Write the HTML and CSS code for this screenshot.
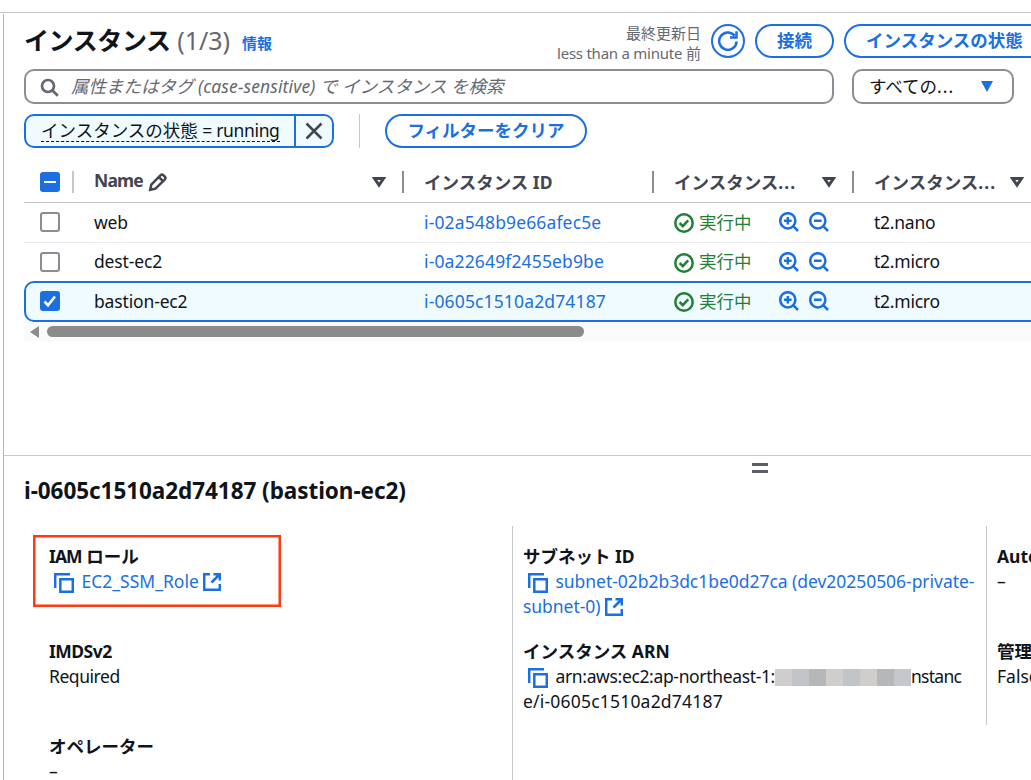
FILE: index.html
```
<!DOCTYPE html>
<html lang="ja">
<head>
	<meta charset="UTF-8">
	<title>インスタンス | EC2</title>
	<link rel="stylesheet" href="styles.css">
</head>
<body>
<svg class="defs">
	<symbol id="i-search" viewBox="0 0 20 20"><circle cx="8" cy="8" r="6"/><path d="M12.3 12.3l5.5 5.5"/></symbol>
	<symbol id="i-zoom-in" viewBox="0 0 20 20"><circle cx="8.8" cy="8.8" r="7.6"/><path d="M14.2 14.2l4.8 4.8M5 8.8h7.6M8.8 5v7.6"/></symbol>
	<symbol id="i-zoom-out" viewBox="0 0 20 20"><circle cx="8.8" cy="8.8" r="7.6"/><path d="M14.2 14.2l4.8 4.8M5 8.8h7.6"/></symbol>
	<symbol id="i-ok" viewBox="0 0 20 20"><circle cx="10" cy="10" r="8.7"/><path d="M5.6 10l3.2 3.2 5.4-5.8"/></symbol>
	<symbol id="i-copy" viewBox="0 0 20 20"><path d="M1.2 15V1.2H16M6.3 6.3h12.5v12.5H6.3z"/></symbol>
	<symbol id="i-external" viewBox="0 0 18 18"><path d="M7 1.2H1.2v15.6h15.6V11M10.5 1.2h6.3V7.500M16.500 1.500L8.500 9.500"/></symbol>
	<symbol id="i-pen" viewBox="0 0 20 20"><path d="M2.200 17.800l1.100-5.300L12.400 3.300a2.200 2.200 0 0 1 3.100 0l1.200 1.200a2.200 2.200 0 0 1 0 3.100L7.500 16.700zM10.800 5l4.200 4.200"/></symbol>
	<symbol id="i-sort" viewBox="0 0 14 12"><path d="M2.500 2.500h9L7 9z"/></symbol>
</svg>
<div class="page">
	<div class="list-panel">
		<div class="list-head">
			<h1><span class="title">インスタンス</span> <span class="counter">(1/3)</span></h1>
			<a class="info">情報</a>
			<div class="updated">最終更新日<br><span class="ago">less than a minute</span> 前</div>
			<a class="btn btn-round"><svg viewBox="0 0 20 20"><path d="M16.600 4.600A8.700 8.700 0 1 0 18.600 10.500M18.500 0.200V6.500H12"/></svg></a>
			<a class="btn btn-connect">接続</a>
			<a class="btn btn-state">インスタンスの状態</a>
		</div>
		<div class="search-row">
			<div class="search">
				<svg class="icon"><use href="#i-search"/></svg>
				<span>属性またはタグ <i class="hint">(case-sensitive)</i> で インスタンス を検索</span>
			</div>
			<div class="select"><span>すべての<span class="dots">...</span></span><b class="caret"></b></div>
		</div>
		<div class="filter-row">
			<div class="token">
				<div class="token-text"><span>インスタンスの状態 <i>= running</i></span></div>
				<div class="token-close"><svg viewBox="0 0 18 18"><path d="M1.500 1.500l15 15M16.500 1.500l-15 15"/></svg></div>
			</div>
			<div class="separator"></div>
			<a class="btn btn-clear">フィルターをクリア</a>
		</div>
		<div class="table">
			<div class="row row-head">
				<div class="cell cell-check"><b class="check minus"></b></div>
				<div class="cell"><span class="name-label">Name</span><svg class="icon pen"><use href="#i-pen"/></svg><svg class="icon sort"><use href="#i-sort"/></svg></div>
				<div class="cell cell-ja">インスタンス ID</div>
				<div class="cell cell-ja">インスタンス<span class="dots">...</span><svg class="icon sort"><use href="#i-sort"/></svg></div>
				<div class="cell cell-ja cell-type">インスタンス<span class="dots">...</span><svg class="icon sort"><use href="#i-sort"/></svg></div>
			</div>
			<div class="row">
				<div class="cell cell-check"><b class="check"></b></div>
				<div class="cell name">web</div>
				<div class="cell id"><a>i-02a548b9e66afec5e</a></div>
				<div class="cell state"><svg class="icon ok"><use href="#i-ok"/></svg><span>実行中</span><svg class="icon zoom"><use href="#i-zoom-in"/></svg><svg class="icon zoom"><use href="#i-zoom-out"/></svg></div>
				<div class="cell type">t2.nano</div>
			</div>
			<div class="row">
				<div class="cell cell-check"><b class="check"></b></div>
				<div class="cell name">dest-ec2</div>
				<div class="cell id"><a>i-0a22649f2455eb9be</a></div>
				<div class="cell state"><svg class="icon ok"><use href="#i-ok"/></svg><span>実行中</span><svg class="icon zoom"><use href="#i-zoom-in"/></svg><svg class="icon zoom"><use href="#i-zoom-out"/></svg></div>
				<div class="cell type">t2.micro</div>
			</div>
			<div class="row selected">
				<div class="cell cell-check"><b class="check checked"><svg viewBox="0 0 20 20"><path d="M4.500 10.500l3.500 3.700 7-8.700"/></svg></b></div>
				<div class="cell name">bastion-ec2</div>
				<div class="cell id"><a>i-0605c1510a2d74187</a></div>
				<div class="cell state"><svg class="icon ok"><use href="#i-ok"/></svg><span>実行中</span><svg class="icon zoom"><use href="#i-zoom-in"/></svg><svg class="icon zoom"><use href="#i-zoom-out"/></svg></div>
				<div class="cell type">t2.micro</div>
			</div>
			<div class="scrollbar"><b class="arrow"></b><b class="thumb"></b></div>
		</div>
	</div>
	<div class="detail-panel">
		<div class="handle"></div>
		<h2>i-0605c1510a2d74187 (bastion-ec2)</h2>
		<div class="columns">
			<div class="column column-first">
				<div class="highlight"></div>
				<dl>
					<dt><span class="iam">IAM</span> ロール</dt>
					<dd><svg class="icon copy"><use href="#i-copy"/></svg><a>EC2_SSM_Role</a> <svg class="icon external"><use href="#i-external"/></svg></dd>
				</dl>
				<dl>
					<dt class="imds">IMDSv2</dt>
					<dd class="required">Required</dd>
				</dl>
				<dl>
					<dt>オペレーター</dt>
					<dd>–</dd>
				</dl>
			</div>
			<div class="column">
				<dl>
					<dt>サブネット ID</dt>
					<dd><svg class="icon copy"><use href="#i-copy"/></svg><a class="subnet">subnet-02b2b3dc1be0d27ca (dev20250506-private-<br>subnet-0)</a> <svg class="icon external"><use href="#i-external"/></svg></dd>
				</dl>
				<dl>
					<dt>インスタンス ARN</dt>
					<dd><svg class="icon copy"><use href="#i-copy"/></svg><span class="arn">arn:aws:ec2:ap-northeast-1:</span><span class="mask"><b></b><b></b><b></b><b></b><b></b><b></b><b></b><b></b></span><span class="arn-end">nstanc</span><br><span class="arn-id">e/i-0605c1510a2d74187</span></dd>
				</dl>
			</div>
			<div class="column">
				<dl>
					<dt>Auto Scaling</dt>
					<dd>–</dd>
				</dl>
				<dl>
					<dt>管理対象</dt>
					<dd>False</dd>
				</dl>
			</div>
		</div>
	</div>
</div>
</body>
</html>
```
FILE: styles.css
```
* {
	box-sizing: border-box
}
body {
	margin: 0;
	height: 780px;
	overflow: hidden;
	background: #fff;
	color: #0f141a;
	font: 17.5px/25px "Noto Sans", "Noto Sans CJK JP", sans-serif;
	white-space: nowrap
}
a {
	color: #1b6fe0
}
h1, h2, dl, dd {
	margin: 0
}
.defs {
	display: none
}
.icon {
	width: 20px;
	height: 20px;
	flex: none;
	fill: none;
	stroke: currentColor;
	stroke-width: 2.5
}
.page {
	margin-top: 12px;
	height: 768px;
	overflow: hidden;
	border-top: 1px solid #c3c3c9
}
.list-panel, .detail-panel {
	margin-left: 3px;
	border-left: 1px solid #b4b4bb;
	padding-left: 20px
}
.list-panel {
	height: 441px;
	margin-top: 1px
}

/* header */
.list-head {
	display: flex;
	height: 55px;
	padding-top: 10px;
	align-items: flex-start
}
h1 {
	flex: none;
	width: 218px;
	font-size: 25px;
	line-height: 33px
}
.title {
	letter-spacing: -0.4px
}
.counter {
	color: #656871;
	font-weight: 400
}
.info {
	flex: none;
	font-size: 15px;
	font-weight: 700;
	line-height: 39px
}
.updated {
	flex: none;
	width: 429px;
	margin-top: -1px;
	color: #656871;
	font-size: 15px;
	line-height: 20px;
	text-align: right
}
.ago {
	letter-spacing: -0.25px
}
.btn {
	flex: none;
	height: 34px;
	border: 2px solid #1b6fe0;
	border-radius: 17px;
	color: #1b6fe0;
	font-weight: 700;
	line-height: 29px;
	text-align: center
}
.btn-round {
	width: 34px;
	margin-left: 10px
}
.btn-round svg {
	display: block;
	width: 20px;
	height: 20px;
	margin: 5px;
	fill: none;
	stroke: #1b6fe0;
	stroke-width: 2.5
}
.btn-connect {
	width: 79px;
	margin-left: 10px
}
.btn-state {
	width: 230px;
	margin-left: 10px;
	padding-left: 20px;
	text-align: left
}
.search-row {
	display: flex;
	gap: 18px;
	height: 45px
}
.search, .select {
	display: flex;
	align-items: center;
	height: 35px;
	border: 2px solid #8c8c94;
	border-radius: 10px
}
.search {
	width: 810px;
	padding-left: 14px;
	color: #656871;
	font-style: italic
}
.search .icon {
	margin: 2px 11px 0 0;
	stroke-width: 2.7
}
.hint {
	letter-spacing: 0.12px
}
.select {
	width: 162px;
	padding: 0 19px 0 15px;
	justify-content: space-between
}
.select > span {
	margin-top: -1px
}
.dots {
	letter-spacing: 1px
}
.caret {
	border: 6.5px solid transparent;
	border-top: 11px solid #1b6fe0;
	border-bottom: 0
}
.filter-row {
	display: flex;
	height: 46px
}
.token {
	display: flex;
	width: 310px;
	height: 34px;
	border: 2px solid #1b6fe0;
	border-radius: 10px;
	background: #f0fbff
}
.token-text {
	width: 270px;
	padding-left: 15px;
	border-right: 2px solid #1b6fe0;
	line-height: 29px
}
.token-text span {
	display: inline-block;
	height: 26px;
	border-bottom: 1px dashed #0f141a
}
.token-text i {
	font-style: normal;
	letter-spacing: -0.35px
}
.token-close svg {
	display: block;
	width: 18px;
	height: 18px;
	margin: 6px 9px;
	stroke: #424650;
	stroke-width: 2.5
}
.separator {
	width: 1px;
	height: 34px;
	margin: 0 25px;
	background: #c6c6cd
}
.btn-clear {
	width: 202px
}

/* table */
.row {
	display: grid;
	grid-template-columns: 50px 330px 250px 200px 200px;
	height: 39px;
	padding-bottom: 1px;
	align-items: center
}
.cell {
	display: flex;
	align-items: center;
	height: 25px;
	padding-left: 20px
}
.cell-check {
	padding-left: 16px
}
.row-head {
	height: 43px;
	padding-top: 1px;
	padding-bottom: 0;
	border-bottom: 1px solid #c6c6cd;
	color: #424650;
	font-weight: 700
}
.row-head .cell {
	height: 22px;
	padding-right: 16px;
	border-right: 2px solid #8c8c94
}
.row-head .cell-ja {
	padding-top: 1px
}
.row-head .cell-check {
	padding-right: 0;
	border-color: #c6c6cd
}
.row-head .cell-type {
	padding-right: 28px
}
.row:nth-child(2) {
	height: 40px;
	border-bottom: 1px solid #ebebf0
}
.row:nth-child(3) {
	padding-bottom: 2px
}
.name-label {
	margin-top: -2px;
	letter-spacing: -0.8px
}
.name {
	letter-spacing: -0.15px
}
.id {
	letter-spacing: 0.14px
}
.type {
	letter-spacing: -0.25px
}
.pen {
	margin: 1px 0 0 5px
}
.sort {
	width: 14px;
	height: 12px;
	margin-left: auto;
	stroke-width: 3
}
.check {
	width: 20px;
	height: 20px;
	border: 2px solid #8c8c94;
	border-radius: 3px
}
.minus, .checked {
	border: 0;
	background: #1b6fe0
}
.minus {
	padding: 9px 4px
}
.minus:after {
	content: "";
	display: block;
	height: 2px;
	background: #fff
}
.checked svg {
	display: block;
	fill: none;
	stroke: #fff;
	stroke-width: 2.6
}
.state {
	color: #1f8035
}
.state span {
	width: 80px;
	margin-left: 5px
}
.ok {
	margin-top: 2px
}
.zoom {
	margin-right: 10px;
	color: #1b6fe0
}
.selected {
	grid-template-columns: 48px 330px 250px 200px 200px;
	height: 41px;
	width: 1040px;
	border: 2px solid #1b6fe0;
	border-radius: 10px;
	background: #f0fbff;
	margin-top: -1px
}
.selected .cell-check {
	padding-left: 14px
}
.scrollbar {
	display: flex;
	align-items: center;
	height: 19px;
	padding-left: 6px;
	background: #fafafa
}
.arrow {
	border: 6px solid transparent;
	border-right: 9px solid #8b8b8b;
	border-left: 0
}
.thumb {
	width: 537px;
	height: 11px;
	margin-left: 8px;
	border-radius: 6px;
	background: #8b8b8b
}

/* details */
.detail-panel {
	height: 325px;
	border-top: 1px solid #c6c6cd
}
.handle {
	width: 16px;
	height: 10px;
	margin: 7px 0 0 728px;
	border: solid #5b5e68;
	border-width: 3px 0
}
h2 {
	margin-top: 2px;
	font-size: 22.5px;
	line-height: 31px;
	letter-spacing: -0.06px
}
.columns {
	display: grid;
	grid-template-columns: 489px 474px 300px;
	margin-top: 20px
}
.column {
	position: relative;
	height: 199px;
	padding: 18px 0 0 10px
}
.column:not(:last-child) {
	border-right: 1px solid #c6c6cd
}
.column-first {
	height: 254px;
	padding-left: 25px
}
dl {
	height: 95px
}
dt {
	font-weight: 700
}
.highlight {
	position: absolute;
	left: 9px;
	top: 9px;
	width: 248px;
	height: 72px;
	border: 2.5px solid #ff3b12;
	box-shadow: inset 0 0 0 0.5px #ff3b12
}
.iam {
	letter-spacing: -0.9px
}
.imds {
	letter-spacing: -0.5px
}
.required {
	letter-spacing: -0.45px
}
.subnet {
	letter-spacing: -0.04px
}
.copy {
	margin: 0 7.5px 0 5px;
	vertical-align: -5px;
	color: #1b6fe0
}
.external {
	width: 18px;
	height: 18px;
	vertical-align: -3px;
	color: #1b6fe0
}
.arn {
	letter-spacing: -0.35px
}
.arn-end {
	letter-spacing: -0.7px
}
.arn-id {
	letter-spacing: 0.2px
}
.mask {
	display: inline-grid;
	grid-template-columns: repeat(8, 17px);
	height: 17px;
	vertical-align: -3px
}
.mask b {
	background: #d0cecd
}
.mask b:nth-child(2), .mask b:nth-child(5) {
	background: #c1c4c8
}
.mask b:nth-child(3), .mask b:nth-child(7) {
	background: #b5b7b9
}
.mask b:nth-child(8) {
	background: #c6c7cc
}
```
